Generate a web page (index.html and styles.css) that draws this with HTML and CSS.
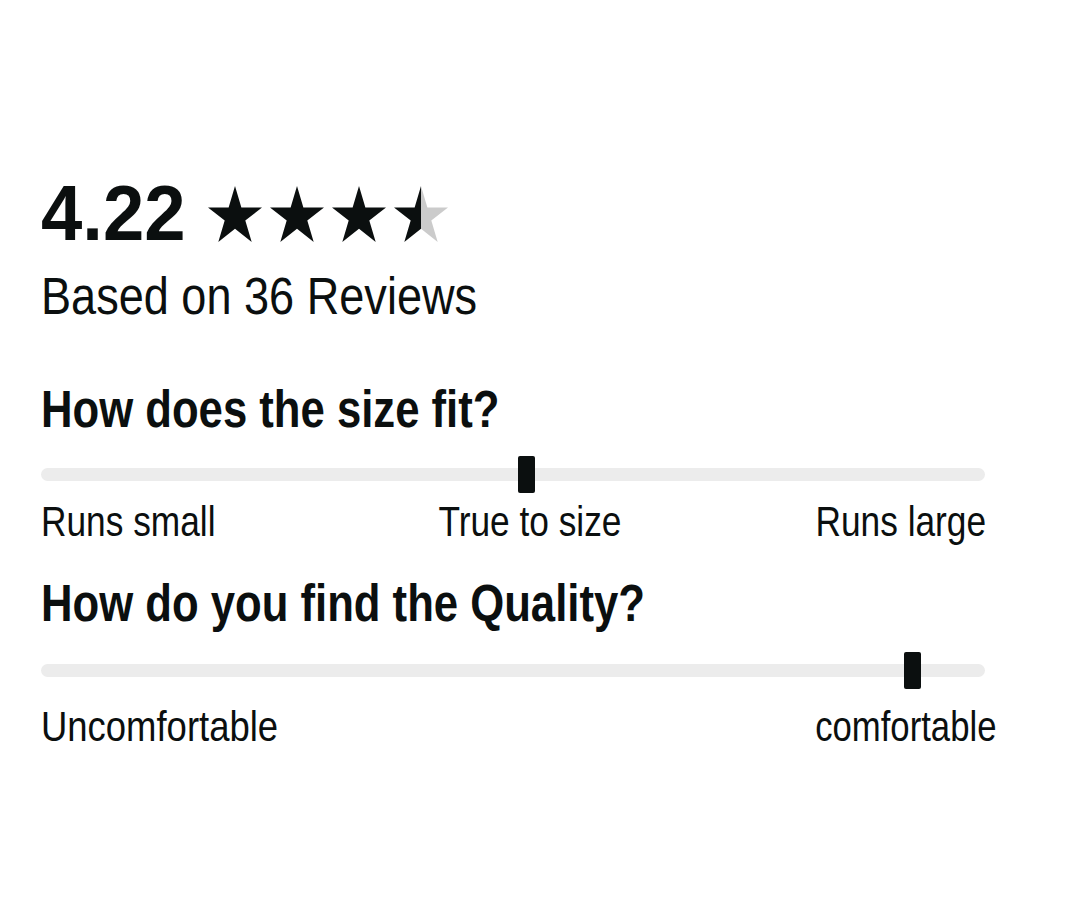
FILE: index.html
```html
<!DOCTYPE html>
<html lang="en">
<head>
<meta charset="utf-8">
<title>Reviews</title>
<link rel="stylesheet" href="styles.css">
</head>
<body>
<div class="review">
  <div class="score-row">
    <span class="score sq">4.22</span>
    <div class="stars">
      <svg class="star" viewBox="-95.1 -100 190.2 180.9" preserveAspectRatio="none"><polygon fill="currentColor" points="0,-100 22.45,-30.9 95.1,-30.9 36.3,11.8 58.8,80.9 0,38.2 -58.8,80.9 -36.3,11.8 -95.1,-30.9 -22.45,-30.9"/></svg>
      <svg class="star" viewBox="-95.1 -100 190.2 180.9" preserveAspectRatio="none"><polygon fill="currentColor" points="0,-100 22.45,-30.9 95.1,-30.9 36.3,11.8 58.8,80.9 0,38.2 -58.8,80.9 -36.3,11.8 -95.1,-30.9 -22.45,-30.9"/></svg>
      <svg class="star" viewBox="-95.1 -100 190.2 180.9" preserveAspectRatio="none"><polygon fill="currentColor" points="0,-100 22.45,-30.9 95.1,-30.9 36.3,11.8 58.8,80.9 0,38.2 -58.8,80.9 -36.3,11.8 -95.1,-30.9 -22.45,-30.9"/></svg>
      <svg class="star" viewBox="-95.1 -100 190.2 180.9" preserveAspectRatio="none">
        <defs>
          <linearGradient id="half" x1="0" y1="0" x2="1" y2="0">
            <stop offset="0.5" stop-color="#0b0f0f"/>
            <stop offset="0.5" stop-color="#cbcbcb"/>
          </linearGradient>
        </defs>
        <polygon fill="url(#half)" points="0,-100 22.45,-30.9 95.1,-30.9 36.3,11.8 58.8,80.9 0,38.2 -58.8,80.9 -36.3,11.8 -95.1,-30.9 -22.45,-30.9"/>
      </svg>
    </div>
  </div>
  <p class="based"><span class="sq">Based on 36 Reviews</span></p>

  <section class="question q-size">
    <h2 class="q-title"><span class="sq">How does the size fit?</span></h2>
    <div class="slider">
      <div class="track"></div>
      <div class="thumb" style="left:50.5%"></div>
    </div>
    <div class="labels labels-3">
      <span class="lbl lbl-left">Runs small</span>
      <span class="lbl lbl-mid">True to size</span>
      <span class="lbl lbl-right">Runs large</span>
    </div>
  </section>

  <section class="question q-quality">
    <h2 class="q-title"><span class="sq">How do you find the Quality?</span></h2>
    <div class="slider">
      <div class="track"></div>
      <div class="thumb" style="left:91.4%"></div>
    </div>
    <div class="labels labels-2">
      <span class="lbl lbl-left lbl-wide">Uncomfortable</span>
      <span class="lbl lbl-right lbl-narrow">comfortable</span>
    </div>
  </section>
</div>
</body>
</html>
```

FILE: styles.css
```css
html, body {
  margin: 0;
  padding: 0;
  background: #ffffff;
}

body {
  font-family: "Liberation Sans", Arial, sans-serif;
  color: #0b0f0f;
}

.review {
  width: 944px;
  padding: 175px 0 0 41px;
}

.sq {
  display: inline-block;
  transform-origin: left center;
}

.score-row {
  display: flex;
  align-items: center;
  height: 77px;
}

.score {
  font-size: 77px;
  line-height: 77px;
  font-weight: 700;
  transform: scaleX(0.965);
}

.stars {
  display: flex;
  gap: 8px;
  margin-left: 17px;
  color: #0b0f0f;
}

.star {
  display: block;
  width: 54px;
  height: 56px;
}

.based {
  margin: 15px 0 0;
  font-size: 51px;
  line-height: 60px;
  font-weight: 400;
}

.based .sq {
  transform: scaleX(0.884);
}

.q-title {
  margin: 0;
  font-size: 51px;
  line-height: 60px;
  font-weight: 700;
  white-space: nowrap;
}

.q-title .sq {
  transform: scaleX(0.856);
}

.q-size .q-title {
  margin-top: 53px;
}

.q-quality .q-title {
  margin-top: 27px;
}

.slider {
  position: relative;
  height: 37px;
  display: flex;
  align-items: center;
  margin-top: 16px;
}

.q-quality .slider {
  margin-top: 18px;
}

.track {
  flex: 1;
  height: 13px;
  border-radius: 7px;
  background: #ececec;
}

.thumb {
  position: absolute;
  top: 0;
  width: 17px;
  height: 37px;
  border-radius: 2px;
  background: #0b0f0f;
}

.labels {
  font-size: 42px;
  line-height: 50px;
  white-space: nowrap;
}

.labels-3 {
  display: grid;
  grid-template-columns: 1fr auto 1fr;
  margin: 4px -1px 0 0;
}

.labels-2 {
  display: flex;
  justify-content: space-between;
  margin: 13px -11px 0 0;
}

.lbl {
  display: inline-block;
  transform: scaleX(0.84);
}

.lbl-wide {
  transform: scaleX(0.868);
}

.lbl-narrow {
  transform: scaleX(0.826);
}

.lbl-left {
  transform-origin: left center;
  justify-self: start;
}

.lbl-mid {
  transform-origin: center center;
  margin-left: 32px;
}

.lbl-right {
  transform-origin: right center;
  justify-self: end;
}
```
